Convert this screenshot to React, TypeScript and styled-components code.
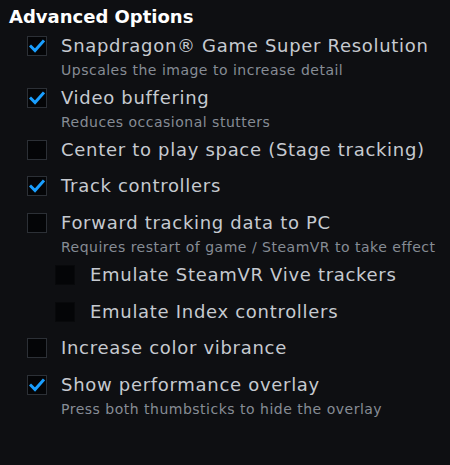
import React from 'react';
import styled, {createGlobalStyle} from 'styled-components';

const GlobalStyle = createGlobalStyle`
  html, body {
    margin: 0;
    padding: 0;
    background: #0e0f12;
  }
  body {
    font-family: "DejaVu Sans", Verdana, sans-serif;
  }
`;

const Panel = styled.div`
  width: 450px;
  height: 465px;
  box-sizing: border-box;
  padding: 5px 0 0 9px;
  background: #0e0f12;
  overflow: hidden;
`;

const Title = styled.div`
  color: #ffffff;
  font-size: 18px;
  font-weight: 700;
  line-height: 23px;
  white-space: nowrap;
`;

const List = styled.div`
  display: flex;
  flex-direction: column;
`;

const Row = styled.div<{ $indent?: boolean }>`
  display: flex;
  align-items: flex-start;
  gap: ${p => (p.$indent ? '15px' : '14px')};
  padding: 7px 0 7.75px ${p => (p.$indent ? '46px' : '18px')};
`;

const Box = styled.div<{ $plain?: boolean }>`
  flex: none;
  width: 20px;
  height: 20px;
  margin-top: 1px;
  box-sizing: border-box;
  background: #040507;
  border: 1px solid ${p => (p.$plain ? '#08090b' : '#2c3036')};
  display: flex;
  align-items: center;
  justify-content: center;
`;

const Text = styled.div`
  display: flex;
  flex-direction: column;
  white-space: nowrap;
`;

const Label = styled.span`
  color: #c6cad0;
  font-size: 18px;
  line-height: 22px;
  letter-spacing: 0.7px;
`;

const Sub = styled.span`
  color: #868c95;
  font-size: 14px;
  line-height: 16px;
  letter-spacing: 0.5px;
  margin: 5px 0 -6px;
`;

const Check = () => (
  <svg width="16" height="14" viewBox="0 0 16 14">
    <path d="M2 7.5 L6 11.5 L14 2.5" fill="none" stroke="#1a9fff" strokeWidth="3" strokeLinecap="square" strokeLinejoin="miter" />
  </svg>
);

type Option = {
  label: string,
  sub?: string,
  checked?: boolean,
  indent?: boolean,
}

const options: Option[] = [
  {label: 'Snapdragon® Game Super Resolution', sub: 'Upscales the image to increase detail', checked: true},
  {label: 'Video buffering', sub: 'Reduces occasional stutters', checked: true},
  {label: 'Center to play space (Stage tracking)'},
  {label: 'Track controllers', checked: true},
  {label: 'Forward tracking data to PC', sub: 'Requires restart of game / SteamVR to take effect'},
  {label: 'Emulate SteamVR Vive trackers', indent: true},
  {label: 'Emulate Index controllers', indent: true},
  {label: 'Increase color vibrance'},
  {label: 'Show performance overlay', sub: 'Press both thumbsticks to hide the overlay', checked: true},
];

export default function App() {
  return (
    <>
      <GlobalStyle />
      <Panel>
        <Title>Advanced Options</Title>
        <List>
          {options.map(o => (
            <Row key={o.label} $indent={o.indent}>
              <Box $plain={o.indent}>{o.checked && <Check />}</Box>
              <Text>
                <Label>{o.label}</Label>
                {o.sub && <Sub>{o.sub}</Sub>}
              </Text>
            </Row>
          ))}
        </List>
      </Panel>
    </>
  );
}
